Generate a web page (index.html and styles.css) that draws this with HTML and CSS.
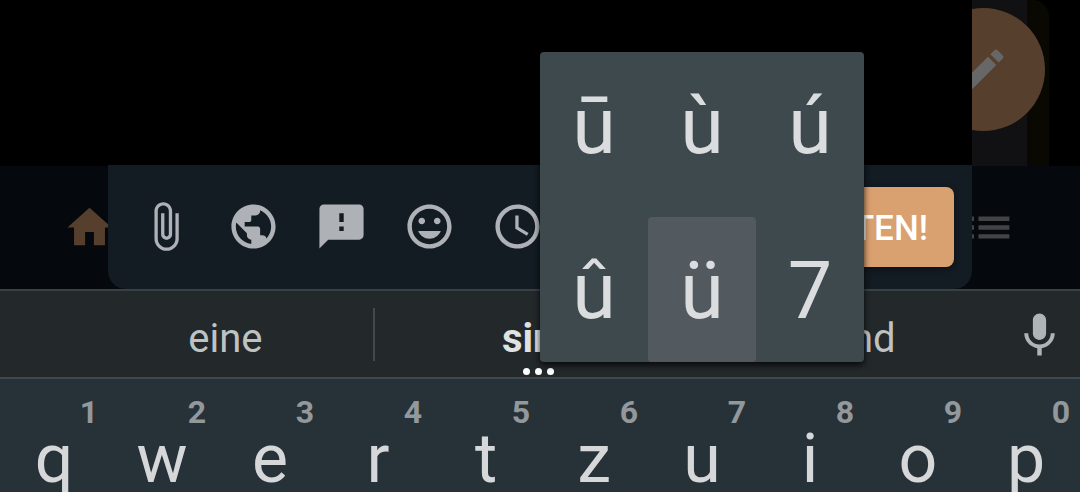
FILE: index.html
```html
<!DOCTYPE html>
<html lang="de">
<head>
    <meta charset="UTF-8">
    <meta name="viewport" content="width=device-width, initial-scale=1.0">
    <title>Antworten</title>
    <link rel="stylesheet" href="styles.css">
</head>
<body>
    <div class="app">
        <div class="feed">
            <div class="feed-card"></div>
            <button class="fab" aria-label="Schreiben">
                <svg class="icon" viewBox="0 0 24 24"><path d="M3 17.25V21h3.75L17.81 9.94l-3.75-3.75L3 17.25zM20.71 7.04c.39-.39.39-1.02 0-1.41l-2.34-2.34c-.39-.39-1.02-.39-1.41 0l-1.83 1.83 3.75 3.75 1.83-1.83z"/></svg>
            </button>
        </div>
        <nav class="tabs">
            <a class="tab active" href="#" aria-label="Start">
                <svg class="icon" viewBox="0 0 24 24"><path d="M10 20v-6h4v6h5v-8h3L12 3 2 12h3v8z"/></svg>
            </a>
            <a class="tab" href="#" aria-label="Listen">
                <svg class="icon" viewBox="0 0 24 24"><path d="M3 13h2v-2H3v2zm0 4h2v-2H3v2zm0-8h2V7H3v2zm4 4h14v-2H7v2zm0 4h14v-2H7v2zM7 7v2h14V7H7z"/></svg>
            </a>
        </nav>

        <div class="composer">
            <div class="composer-body"></div>
            <div class="toolbar">
                <button class="tool" aria-label="Anhang">
                    <svg class="icon" viewBox="0 0 24 24"><path d="M16.5 6v11.5c0 2.21-1.79 4-4 4s-4-1.79-4-4V5c0-1.38 1.12-2.5 2.5-2.5s2.5 1.12 2.5 2.5v10.5c0 .55-.45 1-1 1s-1-.45-1-1V6H10v9.5c0 1.38 1.12 2.5 2.5 2.5s2.5-1.12 2.5-2.5V5c0-2.21-1.79-4-4-4S7 2.79 7 5v12.5c0 3.04 2.46 5.5 5.5 5.5s5.5-2.46 5.5-5.5V6h-1.5z"/></svg>
                </button>
                <button class="tool" aria-label="Sichtbarkeit">
                    <svg class="icon" viewBox="0 0 24 24"><path d="M12 2C6.48 2 2 6.48 2 12s4.48 10 10 10 10-4.48 10-10S17.52 2 12 2zm-1 17.93c-3.95-.49-7-3.85-7-7.93 0-.62.08-1.21.21-1.79L9 15v1c0 1.1.9 2 2 2v1.93zm6.9-2.54c-.26-.81-1-1.39-1.9-1.39h-1v-3c0-.55-.45-1-1-1H8v-2h2c.55 0 1-.45 1-1V7h2c1.1 0 2-.9 2-2v-.41c2.93 1.19 5 4.06 5 7.41 0 2.08-.8 3.97-2.1 5.39z"/></svg>
                </button>
                <button class="tool" aria-label="Inhaltswarnung">
                    <svg class="icon" viewBox="0 0 24 24"><path d="M20 2H4c-1.1 0-1.99.9-1.99 2L2 22l4-4h14c1.1 0 2-.9 2-2V4c0-1.1-.9-2-2-2zm-7 12h-2v-2h2v2zm0-4h-2V6h2v4z"/></svg>
                </button>
                <button class="tool" aria-label="Emoji">
                    <svg class="icon" viewBox="0 0 24 24"><path d="M11.99 2C6.47 2 2 6.48 2 12s4.47 10 9.99 10C17.52 22 22 17.52 22 12S17.52 2 11.99 2zM12 20c-4.42 0-8-3.58-8-8s3.58-8 8-8 8 3.58 8 8-3.58 8-8 8zm3.5-9c.83 0 1.5-.67 1.5-1.5S16.33 8 15.5 8 14 8.67 14 9.5s.67 1.5 1.5 1.5zm-7 0c.83 0 1.5-.67 1.5-1.5S9.33 8 8.5 8 7 8.67 7 9.5 7.67 11 8.5 11zM12 17.5c2.33 0 4.31-1.46 5.11-3.5H6.89c.8 2.04 2.78 3.5 5.11 3.5z"/></svg>
                </button>
                <button class="tool" aria-label="Planen">
                    <svg class="icon" viewBox="0 0 24 24"><path d="M11.99 2C6.47 2 2 6.48 2 12s4.47 10 9.99 10C17.52 22 22 17.52 22 12S17.52 2 11.99 2zM12 20c-4.42 0-8-3.58-8-8s3.58-8 8-8 8 3.58 8 8-3.58 8-8 8zm.5-13H11v6l5.25 3.15.75-1.23-4.5-2.67z"/></svg>
                </button>
                <button class="send">ANTWORTEN!</button>
            </div>
        </div>
    </div>

    <div class="keyboard">
        <div class="suggestions">
            <button class="suggestion first">eine</button>
            <button class="suggestion best">sind</button>
            <button class="suggestion">Sind</button>
            <button class="mic" aria-label="Spracheingabe">
                <svg class="icon" viewBox="0 0 24 24"><path d="M12 14c1.66 0 2.99-1.34 2.99-3L15 5c0-1.66-1.34-3-3-3S9 3.34 9 5v6c0 1.66 1.34 3 3 3zm6.9-3h-1.8c0 3-2.34 5.1-5.1 5.1S6.9 14 6.9 11H5.1c0 3.41 2.62 6.23 5.9 6.72V21h2v-3.28c3.28-.48 5.9-3.3 5.9-6.72z"/></svg>
            </button>
        </div>
        <div class="keys">
            <button class="key"><span class="hint">1</span>q</button>
            <button class="key"><span class="hint">2</span>w</button>
            <button class="key"><span class="hint">3</span>e</button>
            <button class="key"><span class="hint">4</span>r</button>
            <button class="key"><span class="hint">5</span>t</button>
            <button class="key"><span class="hint">6</span>z</button>
            <button class="key"><span class="hint">7</span>u</button>
            <button class="key"><span class="hint">8</span>i</button>
            <button class="key"><span class="hint">9</span>o</button>
            <button class="key"><span class="hint">0</span>p</button>
        </div>
    </div>

    <div class="popup">
        <button class="variant">ū</button>
        <button class="variant">ù</button>
        <button class="variant">ú</button>
        <button class="variant">û</button>
        <button class="variant selected">ü</button>
        <button class="variant">7</button>
    </div>
</body>
</html>
```
FILE: styles.css
```css
* {
    box-sizing: border-box;
}
body {
    position: relative;
    min-height: 100vh;
    margin: 0;
    overflow: hidden;
    display: flex;
    flex-direction: column;
    background-color: #000;
    font-family: Roboto, 'Liberation Sans', sans-serif;
}
button {
    padding: 0;
    border: none;
    background: none;
    color: inherit;
    font: inherit;
    cursor: pointer;
}
.icon {
    display: block;
    width: 53px;
    height: 53px;
    fill: currentColor;
}

/* app behind the keyboard */
.app {
    position: relative;
}
.feed {
    position: relative;
    height: 166px;
    padding: 0 31px 0 50%;
}
.feed-card {
    height: 100%;
    border-right: 22px solid #090803;
    border-radius: 0 16px 0 0;
    background-color: #111113;
}
.fab {
    position: absolute;
    top: 8px;
    right: 35px;
    width: 123px;
    height: 123px;
    display: flex;
    align-items: center;
    justify-content: center;
    border-radius: 50%;
    background-color: #573f2d;
    color: #676767;
}
.tabs {
    display: flex;
    align-items: center;
    justify-content: space-between;
    height: 123px;
    padding: 0 64px 0 63px;
    background-color: #05090d;
}
.tab {
    color: #424344;
}
.tab.active {
    color: #573f2d;
}

/* reply dialog */
.composer {
    position: absolute;
    top: 0;
    bottom: 0;
    left: 10%;
    width: 80%;
    display: flex;
    flex-direction: column;
    border-radius: 0 0 18px 18px;
    overflow: hidden;
}
.composer-body {
    flex: 1;
    background-color: #000;
}
.toolbar {
    display: flex;
    align-items: center;
    height: 124px;
    padding: 0 18px 0 13px;
    background-color: #131b23;
    color: #aeb1b6;
}
.tool {
    width: 88px;
    display: flex;
    justify-content: center;
    padding-bottom: 2px;
}
.send {
    height: 80px;
    margin-left: auto;
    padding: 2px 26px 0;
    border-radius: 8px;
    background-color: #d9a070;
    box-shadow: 0 2px 6px rgba(0, 0, 0, 0.4);
    color: #fff;
    font-size: 35px;
    font-weight: 500;
}

/* keyboard */
.keyboard {
    flex: 1;
    background-color: #273238;
}
.suggestions {
    display: grid;
    grid-template-columns: 76px 8fr 9fr 8fr 76px;
    align-items: center;
    height: 90px;
    border-top: 2px solid #3a4145;
    border-bottom: 2px solid #3e484d;
    background-color: #23282b;
    color: #bfc2c3;
}
.suggestion {
    height: 100%;
    padding: 8px 0 0 2px;
    font-size: 40px;
}
.suggestion.first {
    grid-column: 2;
}
.suggestion.best {
    position: relative;
    padding-left: 0;
    background:
        linear-gradient(#43494c, #43494c) left / 2px 53px no-repeat,
        linear-gradient(#43494c, #43494c) right / 2px 53px no-repeat;
    color: #e0e2e2;
    font-weight: bold;
}
.suggestion.best::after {
    content: '';
    position: absolute;
    bottom: 2px;
    left: 50%;
    width: 7px;
    height: 7px;
    margin-left: -5px;
    border-radius: 50%;
    background-color: #fff;
    box-shadow: -12px 0 #fff, 12px 0 #fff;
}
.mic {
    display: flex;
    justify-content: center;
    padding: 2px 4px 0 0;
    color: #aeb4b8;
}
.keys {
    display: grid;
    grid-template-columns: repeat(10, 1fr);
    padding-top: 14px;
}
.key {
    display: flex;
    flex-direction: column;
    align-items: center;
    color: #d5d7d9;
    font-size: 68px;
    line-height: 56px;
}
.hint {
    align-self: flex-end;
    padding-right: 10px;
    color: #93989c;
    font-size: 32px;
    font-weight: bold;
    line-height: 38px;
}

/* long-press variants */
.popup {
    position: absolute;
    top: 52px;
    left: 50%;
    width: 30%;
    display: grid;
    grid-template-columns: repeat(3, 1fr);
    row-gap: 20px;
    border-radius: 4px;
    background-color: #3d494d;
    box-shadow: 0 3px 6px rgba(0, 0, 0, 0.8);
}
.variant {
    height: 145px;
    padding-top: 3px;
    border-radius: 4px;
    color: #dadcde;
    font-size: 79px;
}
.variant.selected {
    background-color: #525a60;
}
```
